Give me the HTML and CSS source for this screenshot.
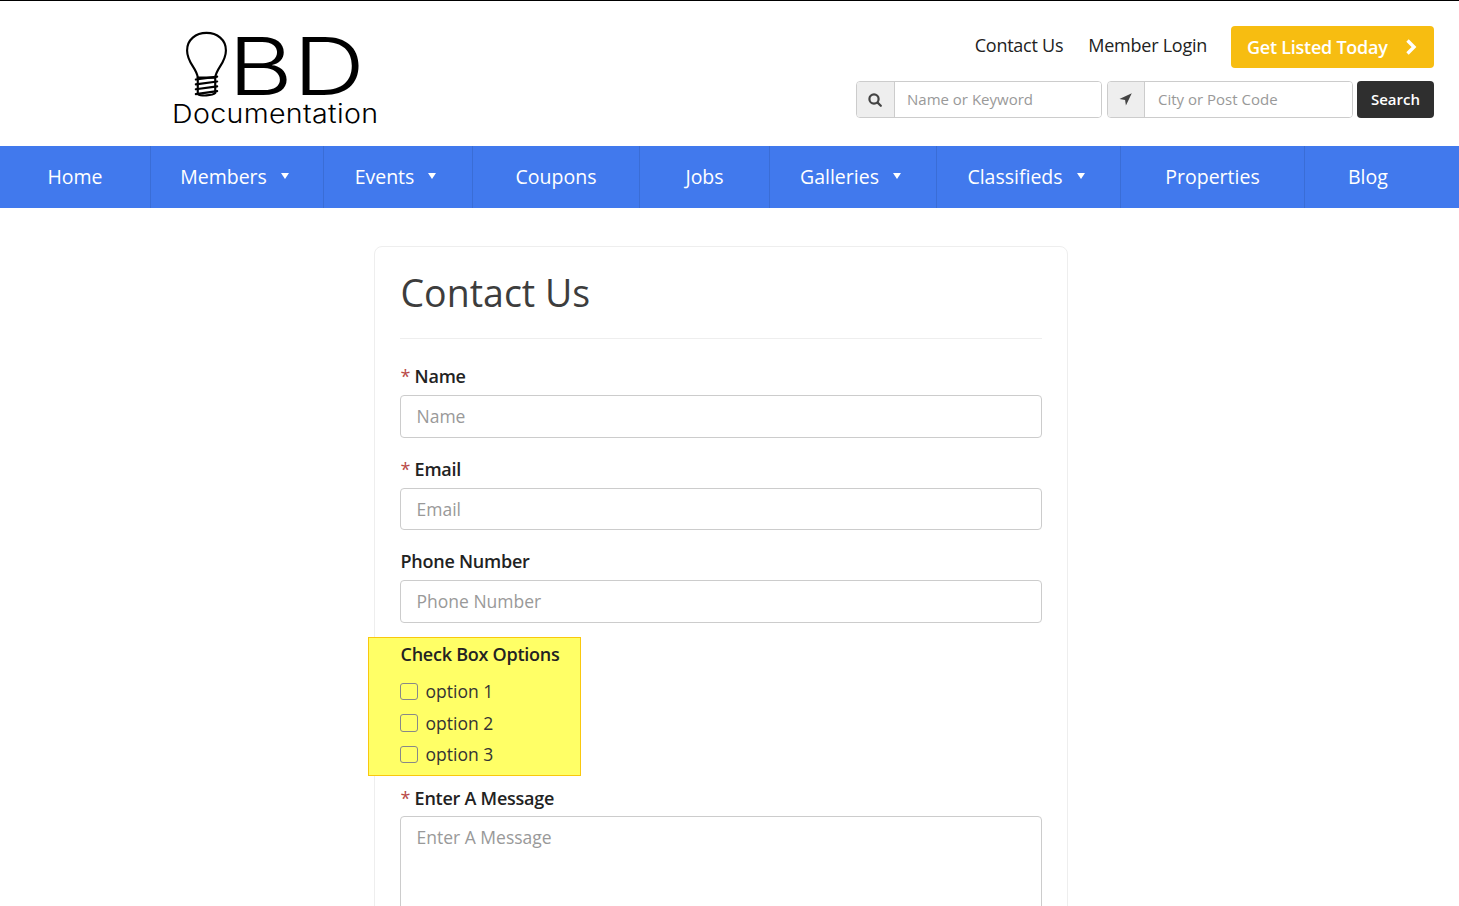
FILE: index.html
```html
<!DOCTYPE html>
<html lang="en">
<head>
<meta charset="utf-8">
<title>Contact Us</title>
<link rel="stylesheet" href="styles.css">
</head>
<body>
<header class="site-header">
  <a class="logo" href="#">
    <span class="logo-top">
      <svg class="bulb" viewBox="0 0 44 68" width="43" height="66" fill="none" stroke="#000" stroke-width="2.2" stroke-linecap="round" stroke-linejoin="round">
        <path d="M13 48 C12 38 2 33 2 20 C2 9 11 2 22 2 C33 2 42 9 42 20 C42 33 32 38 31 48 Z"/>
        <path d="M11 50 L33 47 M11 55 L33 52 M11 60 L33 57 M11 65 L33 62"/>
        <path d="M13 48 V65 C16 67 28 67 31 64 V48"/>
      </svg>
      <span class="logo-bd">BD</span>
    </span>
    <span class="logo-sub">Documentation</span>
  </a>
  <div class="header-right">
    <div class="top-links">
      <a href="#">Contact Us</a>
      <a href="#">Member Login</a>
      <a class="cta" href="#">Get Listed Today
        <svg viewBox="0 0 12 16" width="12" height="16" fill="none" stroke="#fff" stroke-width="3.4"><path d="M2.5 1.5 L9 8 L2.5 14.5"/></svg>
      </a>
    </div>
    <form class="search">
      <div class="search-group">
        <span class="addon">
          <svg viewBox="0 0 14 14" width="14" height="14" fill="none" stroke="#444" stroke-width="2.2" stroke-linecap="round"><circle cx="6" cy="6" r="4.6"/><path d="M9.6 9.6 L12.8 12.8"/></svg>
        </span>
        <input type="text" placeholder="Name or Keyword">
      </div>
      <div class="search-group">
        <span class="addon addon-loc">
          <svg viewBox="0 0 12 12" width="13" height="13" fill="#444"><path d="M11.8 0.2 L0.4 5.6 L5.6 6.4 L6.4 11.6 Z"/></svg>
        </span>
        <input class="loc-input" type="text" placeholder="City or Post Code">
      </div>
      <button class="search-btn" type="button">Search</button>
    </form>
  </div>
</header>
<nav class="main-nav">
  <a href="#">Home</a>
  <a class="has-caret" href="#">Members<i class="caret"></i></a>
  <a class="has-caret" href="#">Events<i class="caret"></i></a>
  <a href="#">Coupons</a>
  <a href="#">Jobs</a>
  <a class="has-caret" href="#">Galleries<i class="caret"></i></a>
  <a class="has-caret" href="#">Classifieds<i class="caret"></i></a>
  <a href="#">Properties</a>
  <a class="last" href="#">Blog</a>
</nav>
<main class="card">
  <h1>Contact Us</h1>
  <div class="field">
    <label><span class="req">*</span> Name</label>
    <input type="text" placeholder="Name">
  </div>
  <div class="field">
    <label><span class="req">*</span> Email</label>
    <input type="text" placeholder="Email">
  </div>
  <div class="field">
    <label>Phone Number</label>
    <input type="text" placeholder="Phone Number">
  </div>
  <div class="highlight">
    <div class="group-label">Check Box Options</div>
    <label class="check"><span class="box"></span>option 1</label>
    <label class="check"><span class="box"></span>option 2</label>
    <label class="check"><span class="box"></span>option 3</label>
  </div>
  <div class="field field-message">
    <label><span class="req">*</span> Enter A Message</label>
    <textarea placeholder="Enter A Message"></textarea>
  </div>
</main>
</body>
</html>
```
FILE: styles.css
```css
* { box-sizing: border-box; }
html, body { height: 906px; overflow: hidden; }
body {
  margin: 0;
  background: #fff;
  color: #333;
  font-family: "Open Sans", sans-serif;
  border-top: 1px solid #000;
}
a { text-decoration: none; color: inherit; }

.site-header {
  height: 145px;
  display: flex;
  justify-content: space-between;
  padding: 25px 25px 0 173px;
}
.logo { display: flex; flex-direction: column; width: 206px; color: #000; }
.logo-top { display: flex; align-items: flex-start; height: 75px; padding: 5px 0 0 12px; }
.bulb { flex: none; }
.logo-bd {
  font-family: "Inter", sans-serif;
  font-size: 80px;
  line-height: 62px;
  height: 62px;
  margin-top: 4px;
  font-weight: 300;
  transform: scaleX(1.25);
  transform-origin: left center;
}
.logo-sub {
  font-family: "Inter", sans-serif;
  font-size: 26px;
  line-height: 26px;
  font-weight: 300;
  letter-spacing: .3px;
  white-space: nowrap;
  margin-left: -1px;
  transform: scaleX(1.1);
  transform-origin: left center;
}

.header-right { display: flex; flex-direction: column; align-items: flex-end; }
.top-links { display: flex; align-items: center; height: 42px; font-size: 18px; color: #222; letter-spacing: -.25px; }
.top-links > a { margin-left: 25px; }
.top-links > a:not(.cta) { margin-top: -5px; }
.top-links > a.cta { margin-left: 24px; }
.cta {
  display: flex; align-items: center; justify-content: space-between;
  width: 203px; height: 42px; padding: 0 17px 0 16px;
  background: #f7bd11; color: #fff; font-weight: 600; font-size: 18px;
  border-radius: 4px;
}
.search { display: flex; margin-top: 13px; height: 37px; }
.search-group {
  display: flex; width: 246px; height: 37px; margin-right: 5px;
  border: 1px solid #ccc; border-radius: 4px; overflow: hidden;
}
.search-group + .search-group { margin-right: 4px; }
.addon {
  width: 38px; flex: none; display: flex; align-items: center; justify-content: center;
  background: #eee; border-right: 1px solid #ccc; padding-right: 2px;
}
.addon-loc { width: 37px; }
.search input {
  flex: 1; min-width: 0; border: 0; outline: 0; padding: 0 12px 2px;
  font: 15px "Open Sans", sans-serif; color: #555;
}
.search input.loc-input { padding-left: 13px; }
.search input::placeholder { color: #999; opacity: 1; }
.search-btn {
  width: 77px; border: 0; border-radius: 4px; background: #2f2f2f; color: #fff;
  font: 600 15px "Open Sans", sans-serif; padding: 0 0 2px;
}

.main-nav {
  height: 62px; display: grid; grid-template-columns: 151px 173px 149px 167px 130px 167px 184px 184px 1fr;
  background: #4179ed; color: #fff; font-size: 19.5px;
}
.main-nav a {
  display: flex; align-items: center; justify-content: center; padding-bottom: 2px;
  border-right: 1px solid #3a6dd6;
  white-space: nowrap;
}
.main-nav a.has-caret { padding-right: 5px; }
.main-nav a.last { border-right: 0; justify-content: flex-start; padding-left: 43px; }
.caret {
  width: 0; height: 0; margin-left: 14px;
  border-left: 4px solid transparent; border-right: 4px solid transparent;
  border-top: 6px solid #fff;
}

.card {
  width: 694px; height: 700px; margin: 38px 0 0 374px; padding: 0 25px;
  border: 1px solid #eee; border-radius: 8px;
}
h1 {
  margin: 0; height: 92px; padding: 21px 0 0 .5px;
  font-size: 37.5px; line-height: 50px; font-weight: 400; color: #3d3d3d;
  border-bottom: 1px solid #eee;
}
.field { margin-bottom: 17px; }
.card > h1 + .field { margin-top: 23px; }
.field label, .group-label {
  display: block; padding-left: .5px; font-size: 18px; line-height: 28px; font-weight: 600; color: #222; letter-spacing: -.25px;
}
.field label { height: 33px; }
.field-message label { height: 32px; }
.req { color: #b94a48; font-weight: 400; }
.field input, .field textarea {
  display: block; width: 100%; height: 42.5px; padding: 0 15.5px;
  border: 1px solid #ccc; border-radius: 4px; outline: 0; resize: none;
  font: 17.5px "Open Sans", sans-serif; color: #555; background: #fff;
}
.field textarea { height: 120px; padding-top: 8px; }
.field input::placeholder, .field textarea::placeholder { color: #999; opacity: 1; }

.highlight {
  width: 213px; height: 139px; margin: -2.5px 0 8px -32px; padding: 2px 0 0 31px;
  background: #ffff66; border: 1px solid #f9c80e;
}
.group-label { margin-bottom: 7.5px; }
.check {
  display: flex; align-items: center; height: 31.5px; font-size: 17.5px; color: #333;
}
.box {
  width: 17.5px; height: 17.5px; margin-right: 8px; flex: none;
  border: 1px solid #888; border-radius: 3px;
}
```
